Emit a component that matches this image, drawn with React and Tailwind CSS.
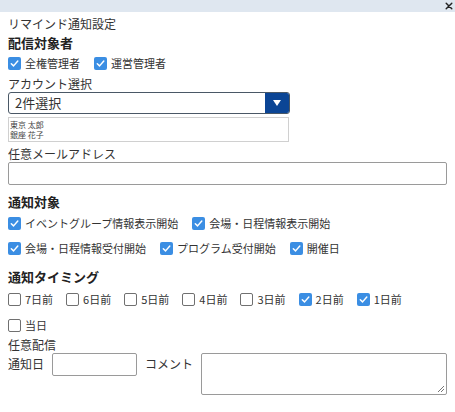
import React from 'react';

function Check({ checked, label }) {
  return (
    <label className="flex items-center gap-1 h-4">
      {checked ? (
        <span className="w-[13px] h-[13px] bg-[#3b8ee3] rounded-[2px] flex items-center justify-center">
          <svg viewBox="0 0 12 12" className="w-[11px] h-[11px]">
            <path d="M2.5 6.2 L5 8.6 L9.6 3.2" fill="none" stroke="white" strokeWidth="1.6" strokeLinecap="round" strokeLinejoin="round" />
          </svg>
        </span>
      ) : (
        <span className="w-[13px] h-[13px] bg-white border border-[#707070] rounded-[2px]" />
      )}
      <span className="text-[11px] leading-4 text-[#333]">{label}</span>
    </label>
  );
}

export default function App() {
  const days = [
    ['7日前', false],
    ['6日前', false],
    ['5日前', false],
    ['4日前', false],
    ['3日前', false],
    ['2日前', true],
    ['1日前', true],
    ['当日', false],
  ];

  return (
    <div className="w-[455px] h-[412px] bg-white overflow-hidden font-['Noto_Sans_CJK_JP',sans-serif] text-[#333]">
      {/* header */}
      <div className="h-3 bg-[#dfe7f0] flex items-center justify-end pr-[2px]">
        <svg viewBox="0 0 10 10" className="w-[8px] h-[8px]">
          <path d="M1.5 1.5 L8.5 8.5 M8.5 1.5 L1.5 8.5" stroke="#222" strokeWidth="1.8" strokeLinecap="round" />
        </svg>
      </div>

      <div className="px-2 flex flex-col">
        <div className="mt-1 text-[12px] leading-4">リマインド通知設定</div>
        <div className="mt-[2px] text-[13px] leading-[18px] font-bold text-[#222]">配信対象者</div>
        <div className="mt-[3px] flex gap-[14px]">
          <Check checked label="全権管理者" />
          <Check checked label="運営管理者" />
        </div>

        <div className="mt-[5px] text-[12px] leading-4">アカウント選択</div>
        <div className="w-[282px] h-[22px] flex border border-[#4a5866] rounded-[3px] overflow-hidden">
          <div className="flex-1 pl-[6px] text-[13px] leading-5 text-[#333]">2件選択</div>
          <div className="w-[24px] bg-[#0b4595] flex items-center justify-center">
            <svg viewBox="0 0 8 6" className="w-[8px] h-[6px]">
              <path d="M0 0 L8 0 L4 6 Z" fill="white" />
            </svg>
          </div>
        </div>
        <div className="mt-[3px] w-[281px] h-[25px] border border-[#d0d0d0] px-[1px] pt-[2px] text-[8px] leading-[10px] text-[#444]">
          <div>東京 太郎</div>
          <div>銀座 花子</div>
        </div>

        <div className="mt-1 text-[12px] leading-4">任意メールアドレス</div>
        <div className="h-[23px] w-full border border-[#9a9a9a] rounded-[2px]" />

        <div className="mt-2 text-[13px] leading-[18px] font-bold text-[#222]">通知対象</div>
        <div className="mt-1 flex flex-wrap gap-x-[14px] gap-y-[9px]">
          <Check checked label="イベントグループ情報表示開始" />
          <Check checked label="会場・日程情報表示開始" />
          <Check checked label="会場・日程情報受付開始" />
          <Check checked label="プログラム受付開始" />
          <Check checked label="開催日" />
        </div>

        <div className="mt-3 text-[13px] leading-[18px] font-bold text-[#222]">通知タイミング</div>
        <div className="mt-[5px] flex flex-wrap gap-x-[13px] gap-y-[10px]">
          {days.map(([d, c]) => (
            <Check key={d} checked={c} label={d} />
          ))}
        </div>

        <div className="mt-1 text-[12px] leading-4">任意配信</div>
        <div className="flex items-start gap-2">
          <span className="text-[12px] leading-[21px]">通知日</span>
          <div className="w-[85px] h-[23px] border border-[#9a9a9a] rounded-[2px]" />
          <span className="text-[12px] leading-[21px]">コメント</span>
          <div className="relative flex-1 h-[42px] border border-[#9a9a9a] rounded-[2px]">
            <svg viewBox="0 0 8 8" className="absolute right-[1px] bottom-[1px] w-[8px] h-[8px]">
              <path d="M7 1 L1 7 M7 4 L4 7" stroke="#777" strokeWidth="1" />
            </svg>
          </div>
        </div>
      </div>
    </div>
  );
}
